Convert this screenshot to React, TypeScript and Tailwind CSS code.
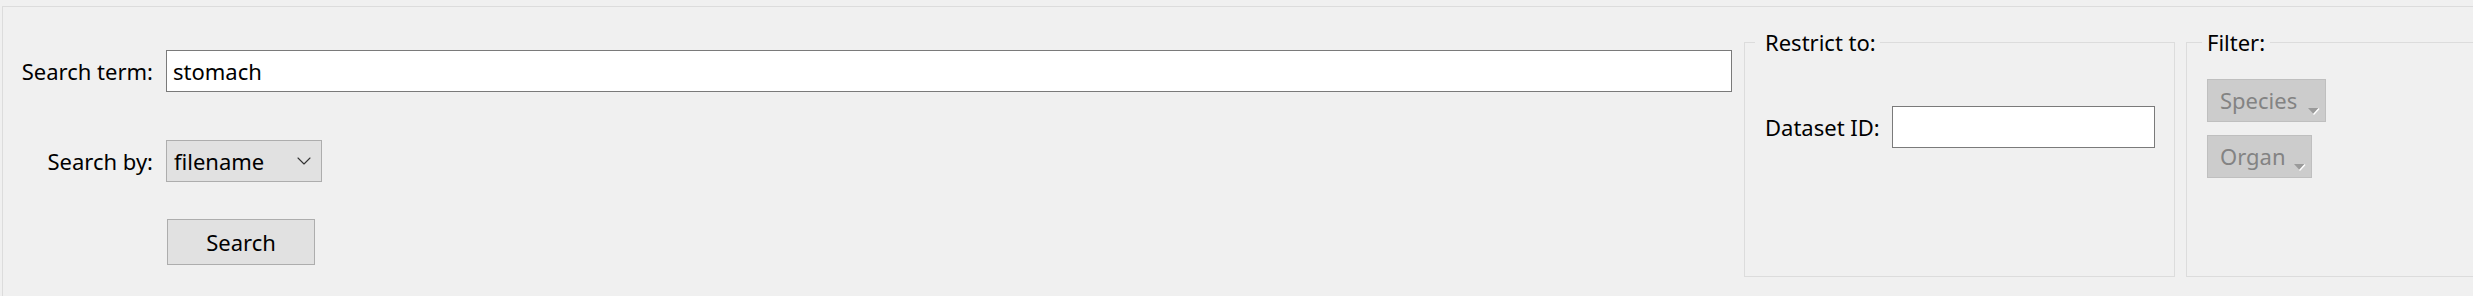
import { ChevronDown } from 'lucide-react';

const font = { fontFamily: '"Noto Sans", "Open Sans", sans-serif' };

function DisabledCombo({ label, width }: { label: string; width: string }) {
  return (
    <div className={`relative flex h-[43px] items-center border border-[#bfbfbf] bg-[#cccccc] pl-[12px] text-[#838383] ${width}`}>
      <span>{label}</span>
      <svg className="absolute right-[5px] bottom-[6px]" width="12" height="7" viewBox="0 0 12 7">
        <polygon points="0,0 11,0 5.5,6" fill="#9a9a9a" />
        <line x1="11" y1="0.5" x2="5.5" y2="6.5" stroke="#ffffff" strokeWidth="1.4" />
      </svg>
    </div>
  );
}

export default function App() {
  return (
    <div className="h-[296px] w-[2473px] overflow-hidden bg-[#f0f0f0] pl-[2px] pt-[6px] text-[22px] text-black" style={font}>
      <div className="flex h-full items-start border-l border-t border-[#dcdcdc]">
        {/* Search form */}
        <div className="w-[1729px] shrink-0 pt-[43px]">
          <div className="flex items-center">
            <span className="w-[150px] shrink-0 text-right">Search term:</span>
            <div className="ml-[13px] flex h-[42px] flex-1 items-center border border-[#7a7a7a] bg-white pl-[6px]">
              stomach
            </div>
          </div>
          <div className="mt-[48px] flex items-center">
            <span className="w-[150px] shrink-0 text-right">Search by:</span>
            <div className="ml-[13px] flex h-[42px] w-[156px] items-center justify-between border border-[#adadad] bg-[#e1e1e1] pl-[7px] pr-[5px]">
              <span>filename</span>
              <ChevronDown className="h-[24px] w-[24px] text-[#333]" strokeWidth={1.1} />
            </div>
          </div>
          <div className="mt-[37px] flex">
            <button className="ml-[164px] h-[46px] w-[148px] border border-[#adadad] bg-[#e1e1e1] text-center">
              Search
            </button>
          </div>
        </div>

        {/* Restrict to */}
        <fieldset className="ml-[12px] mt-[20px] h-[250px] w-[431px] shrink-0 border border-[#dcdcdc] pl-[20px]">
          <legend className="ml-[-10px] pl-[10px] pr-[4px] leading-[30px]">Restrict to:</legend>
          <div className="mt-[49px] flex items-center">
            <span>Dataset ID:</span>
            <div className="ml-[12px] h-[42px] w-[263px] border border-[#7a7a7a] bg-white" />
          </div>
        </fieldset>

        {/* Filter */}
        <fieldset className="ml-[11px] mt-[20px] h-[250px] w-[400px] shrink-0 border border-[#dcdcdc] pl-[20px]">
          <legend className="ml-[-5px] px-[5px] leading-[30px]">Filter:</legend>
          <div className="mt-[22px] flex flex-col items-start gap-[13px]">
            <DisabledCombo label="Species" width="w-[119px]" />
            <DisabledCombo label="Organ" width="w-[105px]" />
          </div>
        </fieldset>
      </div>
    </div>
  );
}
